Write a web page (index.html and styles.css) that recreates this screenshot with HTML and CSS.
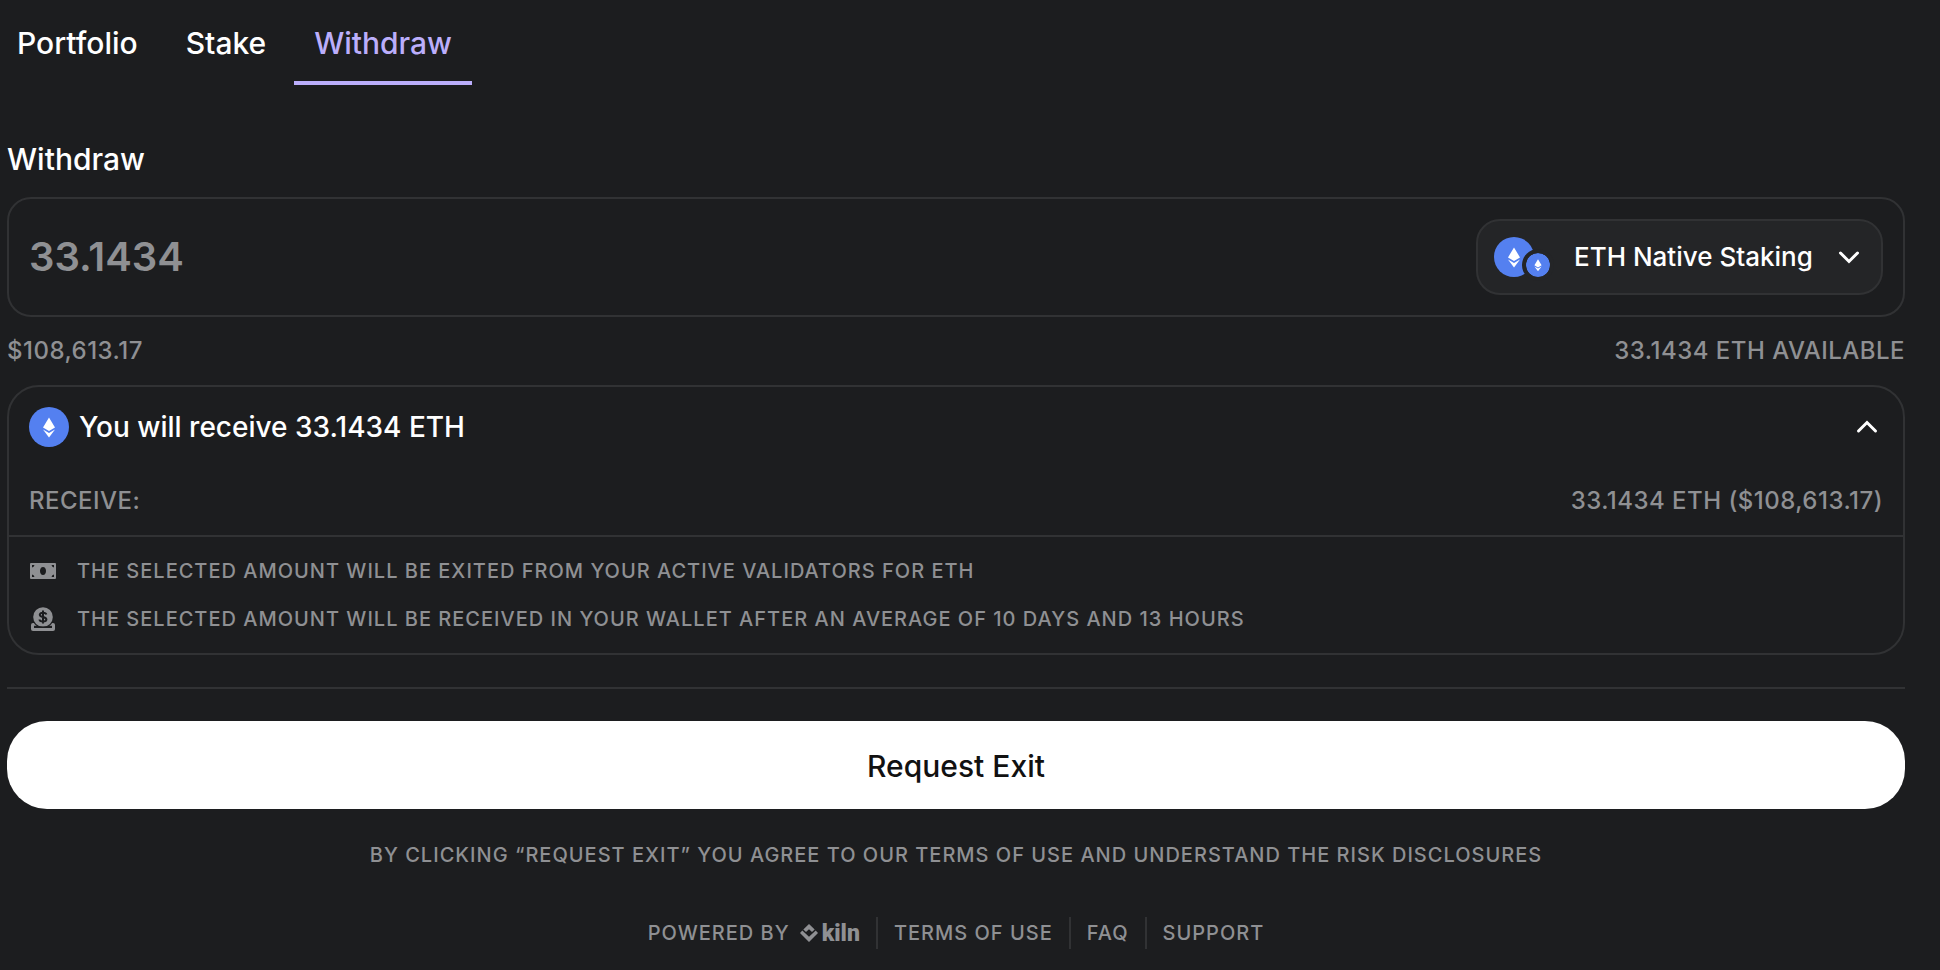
FILE: index.html
```html
<!DOCTYPE html>
<html lang="en">
<head>
<meta charset="utf-8">
<meta name="viewport" content="width=device-width, initial-scale=1">
<title>Withdraw</title>
<link rel="stylesheet" href="styles.css">
</head>
<body>
<svg class="sprite" aria-hidden="true">
  <symbol id="eth" viewBox="0 0 40 40">
    <circle cx="20" cy="20" r="20" fill="#5480f0"/>
    <path fill="#fff" d="M20 10.500 26 20.400 20 24 14 20.400ZM14 22.400 20 26 26 22.400 20 30.500Z"/>
  </symbol>
</svg>
<div class="page">
  <nav class="tabs">
    <a class="tab" href="#portfolio">Portfolio</a>
    <a class="tab" href="#stake">Stake</a>
    <a class="tab tab-active" href="#withdraw" aria-current="page">Withdraw</a>
  </nav>
  <main>
    <form class="form">
      <label class="title" for="amount">Withdraw</label>
      <div class="amount-box">
        <input class="amount" id="amount" type="text" inputmode="decimal" value="33.1434">
        <label class="asset">
          <span class="asset-icons">
            <svg class="coin" aria-hidden="true"><use href="#eth"/></svg>
            <svg class="coin-badge" aria-hidden="true"><use href="#eth"/></svg>
          </span>
          <select class="asset-select" aria-label="Staking product">
            <option>ETH Native Staking</option>
          </select>
          <svg class="chevron" viewBox="0 0 24 24" aria-hidden="true"><path d="M3.500 8 12 16.500 20.500 8"/></svg>
        </label>
      </div>
      <div class="row meta">
        <span>$108,613.17</span>
        <span>33.1434 ETH AVAILABLE</span>
      </div>
      <section class="card">
        <button class="row summary" type="button" aria-expanded="true">
          <svg class="coin" aria-hidden="true"><use href="#eth"/></svg>
          <span class="summary-text">You will receive 33.1434 ETH</span>
          <svg class="chevron" viewBox="0 0 24 24" aria-hidden="true"><path d="M3.500 16 12 7.500 20.500 16"/></svg>
        </button>
        <div class="row receive">
          <span>RECEIVE:</span>
          <span>33.1434 ETH ($108,613.17)</span>
        </div>
        <ul class="notes">
          <li class="note">
            <svg class="note-icon" viewBox="0 0 28 28" aria-hidden="true">
              <path fill="currentColor" fill-rule="evenodd" d="M2 6H26Q27 6 27 7V21Q27 22 26 22H2Q1 22 1 21V7Q1 6 2 6ZM14 10C12 10 11 11.700 11 14S12 18 14 18 17 16.300 17 14 16 10 14 10ZM3 8V10.500Q5 10.300 5.500 8ZM22.500 8Q23 10.300 25 10.500V8ZM3 17.500V20H5.500Q5 17.700 3 17.500ZM25 17.500Q23 17.700 22.500 20H25Z"/>
            </svg>
            THE SELECTED AMOUNT WILL BE EXITED FROM YOUR ACTIVE VALIDATORS FOR ETH
          </li>
          <li class="note">
            <svg class="note-icon" viewBox="0 0 28 28" aria-hidden="true">
              <path fill="currentColor" d="M4 18H24Q26 18 26 20V24Q26 26 24 26H4Q2 26 2 24V20Q2 18 4 18Z"/>
              <path fill="#1c1d1f" d="M5 20.800H23V22.800H5Z"/>
              <circle cx="14" cy="12" r="11" fill="#1c1d1f"/>
              <circle cx="14" cy="12" r="9.800" fill="currentColor"/>
              <path fill="#1c1d1f" d="M5 21.500H23V23H5Z"/>
              <path fill="none" stroke="#1c1d1f" stroke-width="2" d="M17.300 9.500Q17 7.700 14 7.700T10.800 9.700Q10.800 11.300 14 12T17.400 14.300Q17.400 16.500 14 16.500T10.500 14.500M14 5.500V18.500"/>
            </svg>
            THE SELECTED AMOUNT WILL BE RECEIVED IN YOUR WALLET AFTER AN AVERAGE OF 10 DAYS AND 13 HOURS
          </li>
        </ul>
      </section>
      <hr class="divider">
      <button class="submit" type="button">Request Exit</button>
      <p class="legal">BY CLICKING “REQUEST EXIT” YOU AGREE TO OUR TERMS OF USE AND UNDERSTAND THE RISK DISCLOSURES</p>
    </form>
  </main>
  <footer class="footer">
    <a class="footer-link powered" href="#kiln">POWERED BY
      <span class="kiln">
        <svg class="kiln-mark" viewBox="0 0 18 18" aria-hidden="true">
          <path fill="currentColor" d="M9 0 14.700 5.500 12 8 9 5.200 6 8 3.300 5.500ZM2.300 6.500 9 12.800 15.700 6.500 18 9 9 18 0 9Z"/>
        </svg>
        <span class="kiln-word">kiln</span>
      </span>
    </a>
    <a class="footer-link" href="#terms">TERMS OF USE</a>
    <a class="footer-link" href="#faq">FAQ</a>
    <a class="footer-link" href="#support">SUPPORT</a>
  </footer>
</div>
</body>
</html>
```
FILE: styles.css
```css
:root {
  --bg: #1c1d1f;
  --line: #313234;
  --muted: #8f9093;
  --accent: #bbaefb;
}

* { box-sizing: border-box; }

body {
  margin: 0;
  background: var(--bg);
  color: #fff;
  font-family: Inter, "Liberation Sans", sans-serif;
  font-weight: 500;
}

button, input, select {
  font: inherit;
  color: inherit;
  letter-spacing: inherit;
}

.sprite { position: absolute; width: 0; height: 0; }

.page { padding: 0 35px 0 7px; }

.tabs {
  display: flex;
  gap: 8px;
  margin-left: -10px;
}

.tab {
  padding: 24px 20px 19px;
  border-bottom: 4px solid transparent;
  color: #fff;
  font-size: 30px;
  line-height: 38px;
  text-decoration: none;
}

.tab-active {
  border-color: var(--accent);
  color: var(--accent);
}

.form { display: flex; flex-direction: column; }

.title {
  margin: 55px 0 19px;
  font-size: 30px;
  line-height: 38px;
}

.amount-box {
  display: flex;
  align-items: center;
  justify-content: space-between;
  padding: 20px;
  border: 2px solid var(--line);
  border-radius: 24px;
}

.amount {
  flex: 1;
  min-width: 0;
  padding: 0;
  border: 0;
  background: none;
  color: var(--muted);
  font-size: 40px;
  font-weight: 600;
  line-height: 48px;
}

.asset {
  display: flex;
  align-items: center;
  height: 76px;
  padding: 0 20px 0 16px;
  border: 2px solid var(--line);
  border-radius: 24px;
  background: #242527;
}

.asset-icons {
  position: relative;
  width: 56px;
  height: 40px;
  margin-right: 24px;
}

.coin { display: block; width: 40px; height: 40px; flex: none; }

.coin-badge {
  position: absolute;
  right: 0;
  bottom: 0;
  width: 24px;
  height: 24px;
  border-radius: 50%;
  background: #242527;
  box-shadow: 0 0 0 4px #242527;
}

.asset-select {
  appearance: none;
  padding: 0;
  border: 0;
  background: none;
  font-size: 26px;
  line-height: 36px;
}

.chevron {
  flex: none;
  width: 24px;
  height: 24px;
  fill: none;
  stroke: #fff;
  stroke-width: 3;
  stroke-linecap: round;
}

.asset .chevron { margin-left: 24px; }

.row {
  display: flex;
  align-items: center;
  justify-content: space-between;
}

.meta, .receive {
  color: var(--muted);
  font-size: 24px;
  line-height: 32px;
  letter-spacing: 0.02em;
}

.meta { padding: 18px 0; }

.card {
  border: 2px solid var(--line);
  border-radius: 32px;
}

.summary {
  width: 100%;
  padding: 20px 24px 20px 20px;
  border: 0;
  background: none;
  font-size: 28px;
  line-height: 36px;
  text-align: left;
}

.summary-text { flex: 1; margin-left: 10px; }

.receive { padding: 18px 20px; }

.notes {
  display: flex;
  flex-direction: column;
  gap: 20px;
  margin: 0;
  padding: 20px;
  border-top: 2px solid var(--line);
  list-style: none;
}

.note {
  display: flex;
  align-items: center;
  gap: 20px;
  color: var(--muted);
  font-size: 20px;
  line-height: 28px;
  letter-spacing: 1px;
}

.note-icon { flex: none; width: 28px; height: 28px; }

.divider {
  width: 100%;
  height: 2px;
  margin: 32px 0;
  border: 0;
  background: var(--line);
}

.submit {
  height: 88px;
  padding: 2px 24px 0;
  border: 0;
  border-radius: 40px;
  background: #fff;
  color: #111;
  font-size: 30px;
}

.legal {
  margin: 32px 0 0;
  color: var(--muted);
  font-size: 20px;
  line-height: 28px;
  letter-spacing: 1px;
  text-align: center;
}

.footer {
  display: flex;
  justify-content: center;
  margin-top: 48px;
}

.footer-link {
  display: flex;
  align-items: center;
  height: 32px;
  padding: 0 16px;
  color: var(--muted);
  font-size: 20px;
  letter-spacing: 1px;
  text-decoration: none;
}

.footer-link + .footer-link { border-left: 2px solid var(--line); }

.powered { gap: 10px; }

.kiln { display: flex; align-items: center; gap: 4px; }

.kiln-mark { width: 18px; height: 18px; }

.kiln-word {
  font-family: Roboto, sans-serif;
  font-size: 23px;
  font-weight: 900;
  letter-spacing: 0;
}
```
